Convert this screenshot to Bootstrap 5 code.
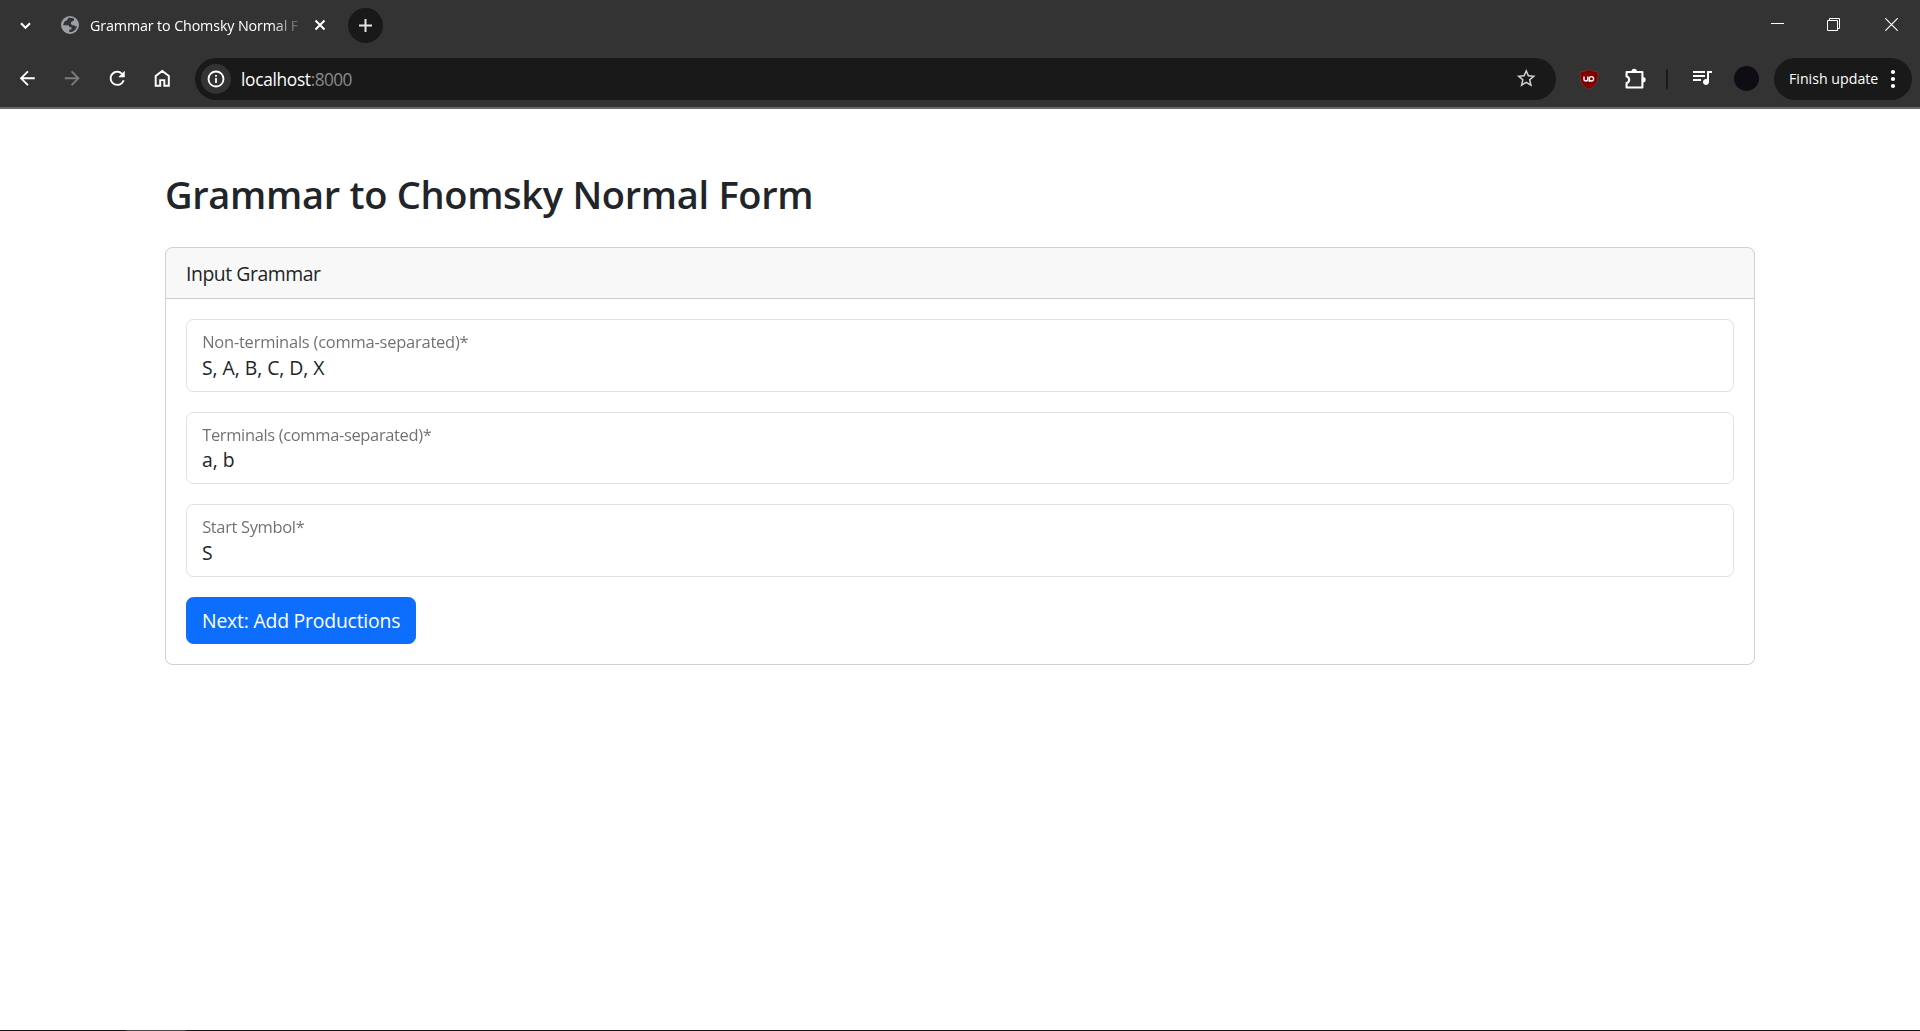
<!DOCTYPE html>
<html lang="en">
<head>
<meta charset="utf-8">
<title>Grammar to Chomsky Normal Form</title>
<link href="https://cdn.jsdelivr.net/npm/bootstrap@5.3.0/dist/css/bootstrap.min.css" rel="stylesheet">
<style>
html{font-size:20px}
body{font-family:"Open Sans","Noto Sans",sans-serif;height:1031px;overflow:hidden}
svg{display:block;flex:none}
.browser{background:#333;border-bottom:2px solid #676767;color:#fff}
.tabstrip{height:50px}
.toolbar-row{height:57px}
.i-chev{margin-left:17px}
.i-globe{margin-left:27px}
.tab-title{width:209px;margin-left:11px;font-size:14.3px;line-height:20px;padding-top:1px;letter-spacing:-.13px;-webkit-mask-image:linear-gradient(90deg,#000 182px,transparent 214px)}
.i-close{margin-left:12px}
.new-tab{width:35px;height:35px;background:#191919;margin-left:19px}
.i-min{margin-right:43px}
.i-max{margin-right:45px}
.i-exit{margin-right:22px}
.i-min,.i-max,.i-exit{margin-bottom:1px}
.nav-icons{gap:22.7px;margin-left:15.75px}
.omnibox{width:1361px;height:42px;background:#191919;margin-left:21.2px;padding:0 19px 0 6px}
.site-info{width:30px;height:30px;background:#333}
.url{font-size:17.3px;margin-left:10px;line-height:24px;padding-top:2px;letter-spacing:-.3px}
.port{color:#8a8a8a;letter-spacing:-.6px}
.i-shield{margin-left:23px}
.i-puzzle{margin-left:25px}
.bar-split{width:2.5px;height:20px;background:#191919;border-radius:1px;margin-left:19.5px}
.i-queue{margin-left:22px}
.avatar{width:25px;height:25px;background:#100c14;margin-left:20px}
.finish{width:138px;height:42px;background:#191919;margin-left:15px;padding:0 16.5px 0 15px;font-size:14.2px;white-space:nowrap}
.page-wrap{max-width:1650px;padding-left:30px;padding-right:30px}
.page-title{font-size:38px;line-height:48px;font-weight:600;letter-spacing:-.3px;padding-top:1px;height:48px}
.form-heading{font-size:19.4px;letter-spacing:-.45px;line-height:30px;padding-top:11px;padding-bottom:9px}
.form-floating>.form-control{height:72.5px;min-height:72.5px;font-size:19.4px;letter-spacing:-.05px}
.form-floating>.form-control:not(:placeholder-shown){padding-top:34px;padding-bottom:10px}
.form-floating>label{font-size:19.4px;letter-spacing:-.27px;padding-top:21px}
.form-floating>label.label-tight{letter-spacing:-.41px}
.btn-next{font-size:19.4px;letter-spacing:-.21px;line-height:30px;padding-top:8.5px;padding-bottom:6.5px}
.taskbar{height:1px;background:#151515;padding-left:126px}
.taskbar div{width:60px;height:1px;background:#484848}
</style>
</head>
<body class="d-flex flex-column">
<header class="browser">
  <div class="tabstrip d-flex align-items-center">
    <svg class="i-chev" width="17" height="17" viewBox="0 0 17 17" fill="none" stroke="#fff" stroke-width="2.2"><path d="M4 6.2l4.5 4.5L13 6.2"/></svg>
    <svg class="i-globe" width="18" height="18" viewBox="0 0 18 18"><circle cx="9" cy="9" r="9" fill="#9aa0a6"/><path d="M7.2 1.9 6 4.2 3.5 5.6 2 9.2h4.6c1.4 0 1.8.7 1.8 2.1h2.1v2.1H8.3v2.7c3.9.3 7.2-2.6 7.6-6.1-1.2 1-2.2.3-2.6-.7-1.7.3-3.2-.4-3.5-2.3.3-1.2 1.8-1.9 3.3-2.5l-.2-2.1C11.3 1.7 9 1.5 7.2 1.9z" fill="#333"/></svg>
    <div class="tab-title text-nowrap overflow-hidden">Grammar to Chomsky Normal F</div>
    <svg class="i-close" width="18" height="18" viewBox="0 0 18 18" stroke="#fff" stroke-width="2"><path d="M4.5 4.5l9 9M13.5 4.5l-9 9"/></svg>
    <div class="new-tab rounded-circle d-flex align-items-center justify-content-center"><svg width="13" height="13" viewBox="0 0 13 13" stroke="#e3e3e3" stroke-width="2"><path d="M6.5 0v13M0 6.5h13"/></svg></div>
    <svg class="i-min ms-auto" width="13" height="13" viewBox="0 0 13 13" stroke="#fff"><path d="M0 5.5h13"/></svg>
    <svg class="i-max" width="13" height="13" viewBox="0 0 13 13" fill="none" stroke="#fff"><path d="M.5 2.5h10v10H.5zM2.5 2.5V.5h10v10h-2"/></svg>
    <svg class="i-exit" width="13" height="13" viewBox="0 0 13 13" stroke="#fff" stroke-width="1.2"><path d="M.3.3l12.4 12.4M12.7.3L.3 12.7"/></svg>
  </div>
  <div class="toolbar-row d-flex align-items-center">
    <div class="nav-icons d-flex">
      <svg width="22.5" height="22.5" viewBox="0 0 24 24" fill="#fff"><path d="M20 11H7.83l5.59-5.59L12 4l-8 8 8 8 1.41-1.41L7.83 13H20v-2z"/></svg>
      <svg width="22.5" height="22.5" viewBox="0 0 24 24" fill="#7d7d7d"><path d="M12 4l-1.41 1.41L16.17 11H4v2h12.17l-5.58 5.59L12 20l8-8z"/></svg>
      <svg width="22.5" height="22.5" viewBox="0 0 24 24" fill="#fff"><path d="M17.65 6.35A7.958 7.958 0 0 0 12 4c-4.42 0-7.99 3.58-7.99 8s3.57 8 7.99 8c3.73 0 6.84-2.55 7.73-6h-2.08A5.99 5.99 0 0 1 12 18c-3.31 0-6-2.69-6-6s2.69-6 6-6c1.66 0 3.14.69 4.22 1.78L13 11h7V4l-2.35 2.35z"/></svg>
      <svg width="22.5" height="22.5" viewBox="0 0 24 24" fill="none" stroke="#fff" stroke-width="2.1"><path d="M5 20V9.5l7-5.3 7 5.3V20h-4.8v-6H9.800v6z"/></svg>
    </div>
    <div class="omnibox rounded-pill d-flex align-items-center">
      <div class="site-info rounded-circle d-flex align-items-center justify-content-center"><svg width="18" height="18" viewBox="0 0 18 18"><circle cx="9" cy="9" r="7.5" fill="none" stroke="#fff" stroke-width="1.8"/><path d="M9 8v5M9 4.9v1.9" stroke="#fff" stroke-width="1.8"/></svg></div>
      <div class="url">localhost<span class="port">:8000</span></div>
      <svg class="ms-auto" width="22.5" height="22.5" viewBox="0 0 24 24" fill="#d0d0d0"><path d="M22 9.24l-7.19-.62L12 2 9.19 8.63 2 9.24l5.46 4.73L5.82 21 12 17.27 18.18 21l-1.63-7.03L22 9.24zM12 15.4l-3.76 2.27 1-4.28-3.32-2.88 4.38-.38L12 6.1l1.71 4.04 4.38.38-3.32 2.88 1 4.28L12 15.4z"/></svg>
    </div>
    <svg class="i-shield" width="20" height="22" viewBox="0 -1 20 22"><path d="M10 .2c2.5 1.700 5.500 2.500 9 2.700 0 8.300-.8 13.700-9 17.300C1.800 16.600 1 11.200 1 2.900 4.500 2.700 7.500 1.900 10 .2z" fill="#800000" stroke="#6b4646" stroke-width=".6"/><path d="M5 7.500v2.600a1.900 1.900 0 0 0 3.800 0V7.500M9.500 12h1.800" fill="none" stroke="#fff" stroke-width="1.400"/><circle cx="12.400" cy="9.800" r="2.200" fill="none" stroke="#fff" stroke-width="1.400"/></svg>
    <svg class="i-puzzle" width="22" height="22" viewBox="0 0 22 22"><path d="M2.600 4h15.800v15.500H2.600v-4.500c3.400-.9 3.400-5.600 0-6.500z" fill="none" stroke="#fff" stroke-width="2.100" stroke-linejoin="round"/><path d="M7.500 3.500a2.700 2.700 0 0 1 5.400 0zM19 9a2.700 2.700 0 0 1 0 5.400z" fill="#fff"/></svg>
    <div class="bar-split"></div>
    <svg class="i-queue" width="24" height="24" viewBox="0 1 24 24" fill="#fff"><path d="M15 5H3v2h12V5zm0 4H3v2h12V9zM3 15h8v-2H3v2zM17 5v8.180c-.31-.11-.65-.18-1-.18-1.660 0-3 1.340-3 3s1.340 3 3 3 3-1.340 3-3V7h3V5h-5z"/></svg>
    <div class="avatar rounded-circle"></div>
    <div class="finish rounded-pill d-flex align-items-center justify-content-between"><span>Finish update</span><svg width="6" height="20" viewBox="0 0 6 20" fill="#fff"><circle cx="3" cy="3" r="2.100"/><circle cx="3" cy="10" r="2.100"/><circle cx="3" cy="17" r="2.100"/></svg></div>
  </div>
</header>

<main class="container page-wrap mt-5 flex-grow-1">
  <h1 class="mb-4 page-title">Grammar to Chomsky Normal Form</h1>
  <div class="card">
    <div class="card-header form-heading">Input Grammar</div>
    <form class="card-body">
      <div class="form-floating mb-3">
        <input type="text" class="form-control" id="nonTerminals" placeholder="Non-terminals" value="S, A, B, C, D, X">
        <label for="nonTerminals">Non-terminals (comma-separated)*</label>
      </div>
      <div class="form-floating mb-3">
        <input type="text" class="form-control" id="terminals" placeholder="Terminals" value="a, b">
        <label class="label-tight" for="terminals">Terminals (comma-separated)*</label>
      </div>
      <div class="form-floating mb-3">
        <input type="text" class="form-control" id="startSymbol" placeholder="Start Symbol" value="S">
        <label class="label-tight" for="startSymbol">Start Symbol*</label>
      </div>
      <button type="button" class="btn btn-primary btn-next">Next: Add Productions</button>
    </form>
  </div>
</main>
<footer class="taskbar"><div></div></footer>
<script src="https://cdn.jsdelivr.net/npm/bootstrap@5.3.0/dist/js/bootstrap.bundle.min.js"></script>
</body>
</html>
